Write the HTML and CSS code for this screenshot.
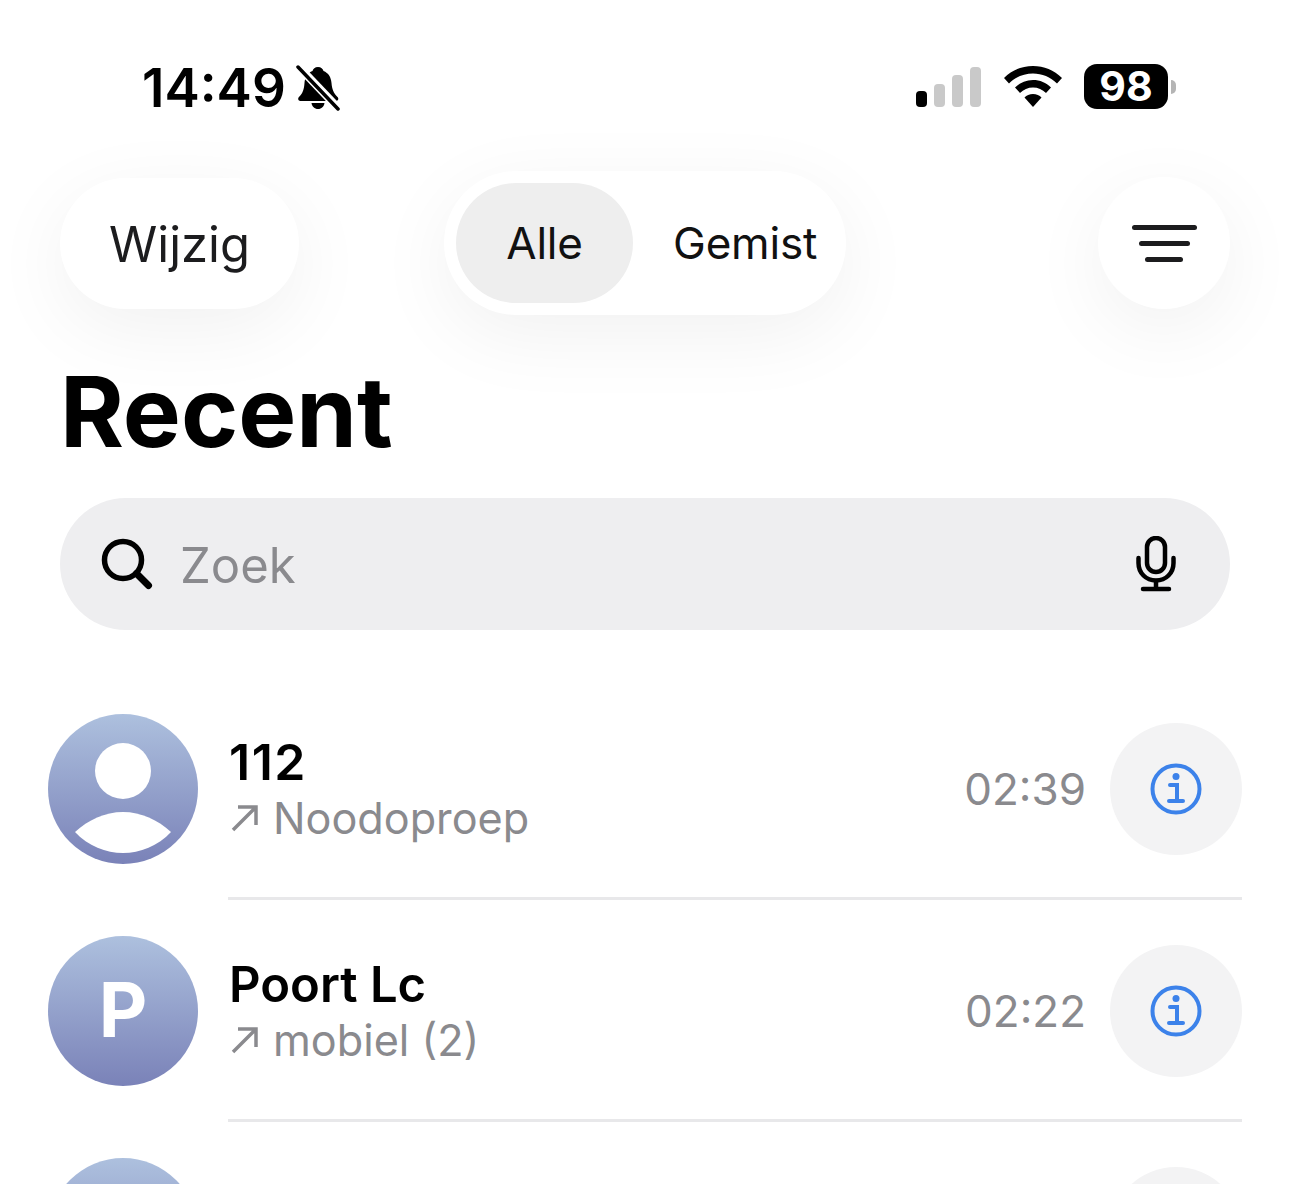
FILE: index.html
```html
<!DOCTYPE html>
<html>
<head>
  <title>Recent</title>
  <link rel="stylesheet" href="styles.css">
</head>
<body>
  <div class="status-bar">
    <div class="status-left">
      <span class="clock">14:49</span>
      <svg class="bell" width="46" height="46" viewBox="0 0 46 46">
        <path fill="#000" d="M23 2c3 0 5 2 5.500 4 5 2 7.500 6 8 12 .5 6 2 10 6 14 1.500 1.500 1 4-2 4H6c-3 0-3.500-2.500-2-4 4-4 5-8 5.500-14 .5-6 3-10 8-12C18 4 20 2 23 2z"/>
        <path fill="#000" d="M16.500 38h13c-.5 3.500-3 6-6.500 6s-6-2.500-6.500-6z"/>
        <path stroke="#fff" stroke-width="8" d="M3 1l41 43"/>
        <path stroke="#000" stroke-width="3.500" stroke-linecap="round" d="M3 2l40 42"/>
      </svg>
    </div>
    <div class="status-right">
      <div class="signal">
        <span class="bar bar-on"></span>
        <span class="bar bar-2"></span>
        <span class="bar bar-3"></span>
        <span class="bar bar-4"></span>
      </div>
      <svg class="wifi" width="58" height="42" viewBox="0 0 58 42">
        <path fill="#000" d="M29 0c11 0 21 4 29 12l-5 5.500C46.500 11 38 7.500 29 7.500S11.500 11 5 17.500L0 12C8 4 18 0 29 0z"/>
        <path fill="#000" d="M29 14c7 0 13 2.500 18 7.500l-5 5.500c-3.500-3.500-8-5.500-13-5.500S19.500 23.500 16 27l-5-5.500C16 16.500 22 14 29 14z"/>
        <path fill="#000" d="M29 28c3.500 0 6.500 1.300 8.500 3.500L29 41l-8.500-9.500C22.500 29.300 25.500 28 29 28z"/>
      </svg>
      <div class="battery">
        <span class="battery-body">98</span>
        <span class="battery-tip"></span>
      </div>
    </div>
  </div>

  <div class="toolbar">
    <div class="pill edit">Wijzig</div>
    <div class="segments">
      <span class="segment segment-active">Alle</span>
      <span class="segment">Gemist</span>
    </div>
    <div class="filter">
      <span class="line line-1"></span>
      <span class="line line-2"></span>
      <span class="line line-3"></span>
    </div>
  </div>

  <h1 class="title">Recent</h1>

  <div class="search">
    <svg width="52" height="52" viewBox="0 0 52 52">
      <circle cx="22" cy="22" r="18.500" fill="none" stroke="#000" stroke-width="5.500"/>
      <path d="M35.500 35.500L47.500 47.500" stroke="#000" stroke-width="7" stroke-linecap="round"/>
    </svg>
    <span class="search-text">Zoek</span>
    <svg class="mic" width="40" height="56" viewBox="0 0 40 56">
      <rect x="11" y="2" width="18" height="34" rx="9" fill="none" stroke="#000" stroke-width="4.500"/>
      <path d="M2.500 22v5c0 10 7.500 17.500 17.500 17.500S37.500 37 37.500 27v-5" fill="none" stroke="#000" stroke-width="4.500" stroke-linecap="round"/>
      <path d="M20 45v8M7 53h26" stroke="#000" stroke-width="4.500" stroke-linecap="round"/>
    </svg>
  </div>

  <div class="calls">
    <div class="call">
      <div class="avatar">
        <svg width="150" height="150" viewBox="0 0 150 150">
          <circle cx="75" cy="57" r="28" fill="#fff"/>
          <path fill="#fff" d="M27 118C40 106 57 98 75 98s35 8 48 20c-13 14-31 21-48 21s-35-7-48-21z"/>
        </svg>
      </div>
      <div class="call-main">
        <div class="call-info">
          <div class="call-name call-number">112</div>
          <div class="call-sub">
            <svg width="30" height="30" viewBox="0 0 30 30"><path d="M3 27L26 4M8 4h18v18" fill="none" stroke="#8a8a8e" stroke-width="3.500"/></svg>
            <span>Noodoproep</span>
          </div>
        </div>
        <div class="call-time">02:39</div>
        <div class="info-btn">
          <svg width="52" height="52" viewBox="0 0 52 52">
            <circle cx="26" cy="26" r="23.500" fill="none" stroke="#3c82ea" stroke-width="4"/>
            <circle cx="26" cy="13.500" r="3.500" fill="#3c82ea"/>
            <path d="M20 22h7v16M19 38h14" fill="none" stroke="#3c82ea" stroke-width="4" stroke-linecap="round"/>
          </svg>
        </div>
      </div>
    </div>

    <div class="call">
      <div class="avatar avatar-letter">P</div>
      <div class="call-main">
        <div class="call-info">
          <div class="call-name">Poort Lc</div>
          <div class="call-sub">
            <svg width="30" height="30" viewBox="0 0 30 30"><path d="M3 27L26 4M8 4h18v18" fill="none" stroke="#8a8a8e" stroke-width="3.500"/></svg>
            <span>mobiel (2)</span>
          </div>
        </div>
        <div class="call-time">02:22</div>
        <div class="info-btn">
          <svg width="52" height="52" viewBox="0 0 52 52">
            <circle cx="26" cy="26" r="23.500" fill="none" stroke="#3c82ea" stroke-width="4"/>
            <circle cx="26" cy="13.500" r="3.500" fill="#3c82ea"/>
            <path d="M20 22h7v16M19 38h14" fill="none" stroke="#3c82ea" stroke-width="4" stroke-linecap="round"/>
          </svg>
        </div>
      </div>
    </div>

    <div class="call">
      <div class="avatar"></div>
      <div class="call-main call-main-end">
        <div class="info-btn"></div>
      </div>
    </div>
  </div>
</body>
</html>
```

FILE: styles.css
```css
html, body {height: 1184px; overflow: hidden;}
body {margin: 0; background: #fff; color: #000; font-family: Inter, "Liberation Sans", sans-serif;}

.status-bar {
  height: 171px;
  padding: 62px 114px 0 142px;
  box-sizing: border-box;
  display: flex;
  justify-content: space-between;
  align-items: flex-start;
}
.status-left {display: flex; align-items: center; gap: 9px;}
.clock {font-size: 53px; font-weight: 600; line-height: 52px;}
.status-right {display: flex; align-items: center; gap: 22px; padding-top: 2px;}
.signal {display: flex; align-items: flex-end; gap: 7px; height: 40px; margin-right: 1px;}
.bar {width: 11px; border-radius: 4px; background: #c9c9c9;}
.bar-on {height: 16px; background: #000;}
.bar-2 {height: 23px;}
.bar-3 {height: 32px;}
.bar-4 {height: 40px;}
.battery {display: flex; align-items: center; gap: 3px;}
.battery-body {
  width: 84px;
  height: 45px;
  border-radius: 13px;
  background: #000;
  color: #fff;
  font-size: 41px;
  font-weight: 700;
  line-height: 45px;
  text-align: center;
}
.battery-tip {width: 5px; height: 14px; border-radius: 0 7px 7px 0; background: #b5b5b5;}

.toolbar {
  height: 144px;
  padding: 0 60px;
  display: flex;
  align-items: center;
}
.pill, .segments, .filter {background: #fff; box-shadow: 0 20px 80px rgba(0, 0, 0, .06);}
.pill {
  width: 239px;
  height: 131px;
  border-radius: 66px;
  font-size: 49px;
  line-height: 133px;
  text-align: center;
  color: #1c1c1e;
}
.segments {
  width: 402px;
  height: 144px;
  margin-left: 145px;
  padding: 12px;
  box-sizing: border-box;
  border-radius: 72px;
  display: flex;
  align-items: center;
  font-size: 44px;
  letter-spacing: -.2px;
  color: #111;
}
.segment {height: 120px; line-height: 120px; padding: 0 14px 0 40px;}
.segment-active {width: 177px; padding: 0; border-radius: 60px; background: #eeeeee; text-align: center;}
.filter {
  width: 132px;
  height: 132px;
  margin-left: auto;
  border-radius: 50%;
  display: flex;
  flex-direction: column;
  align-items: center;
  justify-content: center;
  gap: 11px;
}
.line {height: 5px; border-radius: 3px; background: #1c1c1e;}
.line-1 {width: 65px;}
.line-2 {width: 51px;}
.line-3 {width: 38px;}

.title {
  margin: 44px 0 0 60px;
  height: 139px;
  font-size: 97.500px;
  line-height: 107px;
  font-weight: 700;
}

.search {
  margin: 0 60px;
  height: 132px;
  padding: 0 54px 0 41px;
  border-radius: 66px;
  background: #eeeef0;
  display: flex;
  align-items: center;
}
.search-text {margin-left: 27px; padding-top: 2px; font-size: 49px; color: #8a8a8e;}
.mic {margin-left: auto;}

.calls {height: 554px; box-sizing: border-box; overflow: hidden; padding: 84px 48px 0;}
.call {display: flex; height: 222px;}
.avatar {
  flex: none;
  width: 150px;
  height: 150px;
  border-radius: 50%;
  background: linear-gradient(#adc0de, #7a82b8);
}
.avatar-letter {color: #fff; font-size: 75px; font-weight: 700; line-height: 148px; text-align: center;}
.call-main {
  flex: 1;
  margin-left: 30px;
  height: 183px;
  border-bottom: 3px solid #e8e8ea;
  display: flex;
  align-items: flex-start;
}
.call-main-end {justify-content: flex-end; border-bottom: 0;}
.call-info {flex: 1; padding-top: 21px;}
.call-name {height: 54px; padding-left: 1px; font-size: 49px; font-weight: 600; line-height: 56px;}
.call-number {font-size: 50px; line-height: 54px; letter-spacing: 1.500px;}
.call-sub {display: flex; align-items: center; gap: 13px; padding-left: 2px; font-size: 43.200px; line-height: 58px; color: #8a8a8e;}
.call-time {margin: 47px 24px 0 0; font-size: 44px; line-height: 56px; color: #8a8a8e;}
.info-btn {
  flex: none;
  margin-top: 9px;
  width: 132px;
  height: 132px;
  border-radius: 50%;
  background: #f3f3f4;
  display: flex;
  align-items: center;
  justify-content: center;
}
```
